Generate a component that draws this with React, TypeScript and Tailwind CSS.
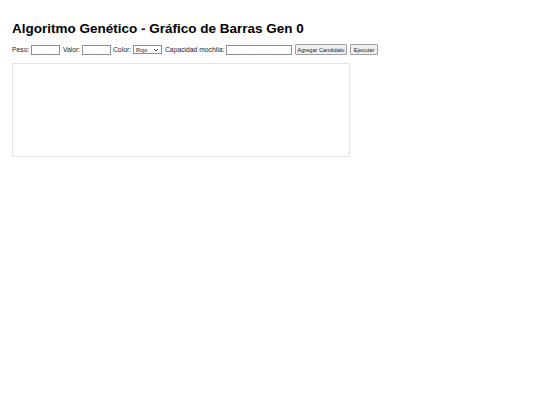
import React from "react";

export default function App() {
  const font = { fontFamily: '"Liberation Sans", Arial, sans-serif' };
  return (
    <div className="min-h-[405px] w-[540px] bg-white text-black" style={font}>
      <div className="pl-[12px] pt-[21px]">
        <h1 className="m-0 text-[13.5px] font-bold leading-[16px]">
          Algoritmo Genético - Gráfico de Barras Gen 0
        </h1>
        <div className="mt-[7px] flex h-[11px] items-center text-[6.75px] leading-[8px] text-[#222]">
          <span className="w-[18px]">Peso:</span>
          <input className="ml-[1px] h-[10px] w-[29px] border border-[#8f8f8f] bg-white" />
          <span className="ml-[3px] w-[18px]">Valor:</span>
          <input className="ml-[1px] h-[10px] w-[29px] border border-[#8f8f8f] bg-white" />
          <span className="ml-[2px] w-[19px]">Color:</span>
          <div className="ml-[1px] flex h-[9px] w-[29px] items-center justify-between border border-[#8f8f8f] bg-white px-[2px] text-[5.5px]">
            <span>Rojo</span>
            <svg width="6" height="4" viewBox="0 0 6 4">
              <path d="M1 1 L3 3 L5 1" fill="none" stroke="#333" strokeWidth="0.9" />
            </svg>
          </div>
          <span className="ml-[3px] w-[60px] whitespace-nowrap">Capacidad mochila:</span>
          <input className="ml-[1px] h-[10px] w-[66px] border border-[#8f8f8f] bg-white" />
          <button className="ml-[3px] flex h-[11px] w-[52px] items-center justify-center whitespace-nowrap rounded-[1px] border border-[#a0a0a0] bg-[#efefef] text-[5.6px]">
            Agregar Candidato
          </button>
          <button className="ml-[3px] flex h-[11px] w-[28px] items-center justify-center rounded-[1px] border border-[#a0a0a0] bg-[#efefef] text-[5.6px]">
            Ejecutar
          </button>
        </div>
        <div className="mt-[8px] h-[94px] w-[338px] border border-[#e3e3e3]" />
      </div>
    </div>
  );
}
